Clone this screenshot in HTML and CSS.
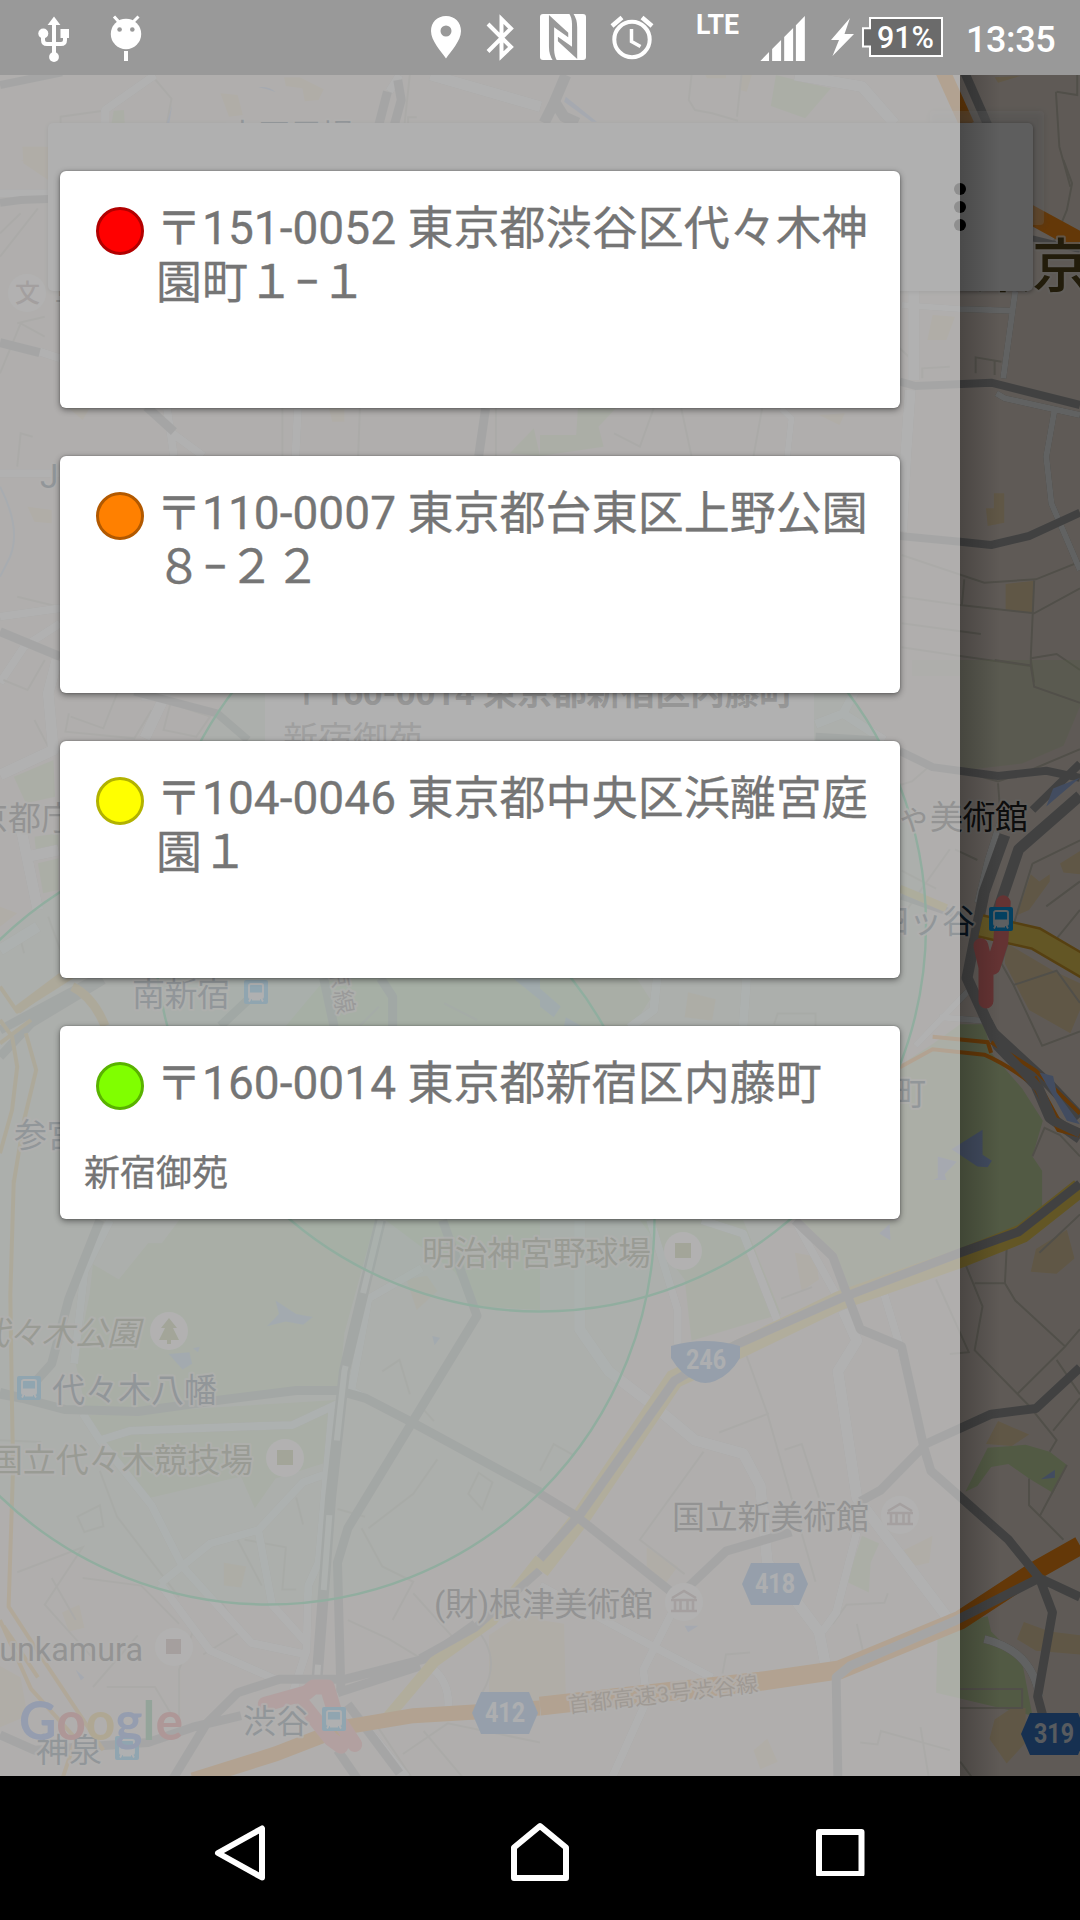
FILE: index.html
```html
<!DOCTYPE html>
<html lang="ja">
<head>
<meta charset="utf-8">
<title>地図</title>
<link rel="stylesheet" href="styles.css">
</head>
<body>
<header class="status">
  <div class="status-left">
    <svg width="33" height="75" viewBox="37 0 33 75"><g fill="none" stroke="#fff" stroke-width="4"><path d="M54 23V57M43 34V40Q43 44 47 44H61Q65 44 65 40V35"/></g><g fill="#fff"><path d="M47.600 25L54 16.500L60.400 25z"/><circle cx="54" cy="57" r="4.900"/><circle cx="43.300" cy="33.500" r="5"/><path d="M60.500 29h8.500v9h-8.500z"/></g></svg>
    <svg width="32" height="75" viewBox="110 0 32 75"><circle cx="126" cy="34" r="15.200" fill="#fff"/><path d="M114 16.500L119 22M138.500 16.500L133 22" stroke="#fff" stroke-width="3"/><path d="M124 51h4v10h-4z" fill="#fff"/><circle cx="119.600" cy="29.500" r="2.300" fill="#999"/><circle cx="132.300" cy="29.500" r="2.300" fill="#999"/></svg>
  </div>
  <div class="status-right">
    <svg width="30" height="75" viewBox="431 0 30 75"><path fill="#fff" fill-rule="evenodd" d="M446 16C437 16 431 22.500 431 31C431 41 441 51 446 58.500C451 51 461 41 461 31C461 22.500 455 16 446 16ZM446 25.500a5.500 5.500 0 1 1 0 11a5.500 5.500 0 1 1 0-11z"/></svg>
    <svg class="bt" width="28" height="75" viewBox="486 0 28 75"><path d="M488 24L511 47L501.500 56V19L511 28.500L488 51.500" fill="none" stroke="#fff" stroke-width="4"/></svg>
    <svg class="nfc" width="46" height="75" viewBox="540 0 46 75"><rect x="540" y="14" width="46" height="46" rx="3" fill="#fff"/><g transform="translate(540 0) scale(.3444 .3333)" fill="#999"><path id="nfc-half" d="M26 45L82 98V112L41 82V150Q42 172 50 182H38Q26 165 26 140Z"/><use href="#nfc-half" transform="rotate(180 67 111)"/></g></svg>
    <svg class="alarm" width="44" height="75" viewBox="610 0 44 75"><g fill="none" stroke="#fff"><circle cx="632" cy="39.500" r="17.700" stroke-width="4"/><path d="M631.500 29V41.500L640.500 46.500" stroke-width="3.500"/><path d="M612 26L622 17.500M652 26L642 17.500" stroke-width="4.500"/></g></svg>
    <svg class="lte" width="42" height="75" viewBox="697 0 42 75"><text x="696" y="34" font-size="28" textLength="43" lengthAdjust="spacingAndGlyphs">LTE</text></svg>
    <svg class="signal" width="46" height="75" viewBox="760 0 46 75"><g transform="translate(540 0) scale(.3444 .3333)" fill="#fff"><path d="M640 183H665V156ZM674 183V147L700 120V183ZM709 183V111L735 84V183ZM743 183V76L769 48V183Z"/></g></svg>
    <svg class="bolt" width="24" height="75" viewBox="831 0 24 75"><path d="M850 18L831 40H839L832.500 56L854 34H844.500Z" fill="#fff"/></svg>
    <svg class="battery" width="82" height="75" viewBox="862 0 82 75"><path d="M870 18H942V56H870V46.500H863V28.200H870Z" fill="#6b6b6b" stroke="#fff" stroke-width="2"/><text x="877" y="48" font-size="31" textLength="57" lengthAdjust="spacingAndGlyphs">91%</text></svg>
    <span class="clock">13:35</span>
  </div>
</header>

<main class="stage">
  <svg class="map" width="1080" height="1701" viewBox="0 75 1080 1701">
    <defs>
      <g id="station"><rect width="24" height="24" rx="2" fill="#0aa0f0"/><path d="M5 5.500Q5 4 7 4H17Q19 4 19 5.500V17Q19 18 18 18H6Q5 18 5 17ZM7 18L5 21.500M17 18L19 21.500M8 19.500H16" fill="none" stroke="#e6edf2" stroke-width="1.800"/><path d="M5 12.500H19V17.500H5z" fill="#e6edf2"/></g>
      <g id="museum" fill="none" stroke="#a07f7b" stroke-width="2.600"><path d="M-13 -2H13M-13 9H13M-9 -2V9M-3.500 -2V9M3.500 -2V9M9 -2V9M-12 -4L0 -11L12 -4"/></g>
      <circle id="poi" r="19" fill="#f9f8f6"/>
      <path id="hex" d="M9 0H57L66 21L57 42H9L0 21Z" fill="#3779cb"/>
    </defs>
    <rect y="75" width="1080" height="1701" fill="#ede2d8"/>

    <!-- northern blocks -->
    <g transform="scale(.34439 .33333)">
      <path class="park" d="M330 332L360 330L362 369H324Z"/>
      <path class="block" d="M640 280L690 285L705 345L665 350ZM825 232H870L940 268L925 300L885 304L878 265L830 258ZM65 440H140V540L68 490Z"/>
      <path class="minor" d="M452 240L498 296L485 369M176 369V350L300 332M1190 225L1175 369M1185 369V352H1210"/>
      <g class="roads"><path class="w8" d="M450 225L305 330V369"/><path class="w12" d="M1250 225L1570 320"/><path class="w8" d="M1160 225L1130 275"/></g>
      <path class="rail w8" d="M0 255L180 217"/><path class="rail w10" d="M1125 275L1100 375M1155 240L1165 300L1145 375"/>
      <path class="water" d="M500 315L492 369L484 369ZM750 262Q780 258 800 276L775 268Z"/>
    </g>
    <g transform="translate(540 0) scale(.34439 .33333)">
      <path class="park" d="M685 225L780 250L845 265L770 355L670 318Z"/>
      <path class="block" d="M480 225H540V235H485ZM585 225H615L600 275L580 270ZM1320 232L1395 228L1330 248Z"/>
      <path class="minor" d="M585 225L572 350M1500 275L1560 285V225M1498 275L1508 440L1540 560M440 225L432 300L450 330L500 340L575 362"/>
      <g class="roads"><path class="w12" d="M740 225L935 260L1030 372"/></g>
      <path class="rail w12" d="M75 225L40 310L12 369M45 310L70 350L110 369"/>
      <path class="orange w14" d="M1170 215L1240 375"/><path class="rail w10" d="M1232 215L1300 375"/>
      <path class="water" d="M75 290L165 365H150L70 305Z"/>
    </g>

    <!-- Shinjuku north -->
    <g transform="translate(0 160) scale(.34439 .33333)">
      <path class="block" d="M60 0H130V25ZM80 1040L150 1050V1090L100 1085ZM200 745L240 780L260 745ZM955 745H1000V785H965Z"/>
      <path class="park" d="M1480 880L1550 805L1568 888Z"/>
      <path class="minor" d="M0 290L110 145M50 490L130 470M50 920L60 820L95 830M0 220L60 160M820 745V888M1045 745L1040 888M1440 745V888M0 640L60 490L130 530M50 1310L170 1340"/>
      <g class="roads"><path class="w8" d="M0 100H140M115 575L175 595M500 820L590 888M865 745L858 888M0 940H175M0 1370L175 1345M0 1568L70 1460L175 1390M485 745L505 888"/></g>
      <path class="rail w8" d="M0 128L60 120L140 117"/><path class="rail w10" d="M0 548L115 578M425 740L505 815M1410 745L1390 888M0 1415L175 1490"/>
      <path class="thinwater" d="M0 980Q70 1120 20 1210L0 1250"/>
    </g>
    <g transform="translate(540 160) scale(.34439 .33333)">
      <path class="park" d="M110 745H220L170 800L185 860L0 888V825H105Z"/>
      <path class="block" d="M1140 465L1205 470L1180 540L1125 540ZM1318 1000H1348V1088L1300 1098L1295 1045H1318ZM1352 1272L1435 1262L1430 1358L1352 1352ZM810 765L885 760L870 795Z"/>
      <path class="minor" d="M215 820L290 860L330 745M410 745L440 888M645 745L620 888M1050 1185L1290 1268L1440 1258L1568 1205M1050 1310L1220 1335L1435 1360L1568 1285M1435 1262L1425 1495L1500 1482L1568 1530M1425 1495L1435 1568M1050 1390L1280 1422M1050 1462L1220 1488L1425 1518M1232 1258L1225 1335M1110 655V625L1190 620M1265 640V592L1340 605M1320 600V645M1045 565L1080 600M1520 0L1545 70L1530 150L1490 250"/>
      <g class="roads"><path class="w12" d="M1085 393V660M1075 690L1062 888L1050 1115"/><path class="w6" d="M1050 435L1220 447L1370 452M1380 393L1345 655M1325 700L1350 715L1568 765M1495 745L1470 890L1485 1030L1568 1230M700 745L730 775L718 888"/></g>
      <path class="rail w8" d="M1045 665L1090 678L1310 668L1568 735M1045 1128L1220 1145L1310 1155L1420 1128L1568 1058"/>
      <path class="orange w16" d="M1400 150L1568 245"/><path class="rail w6" d="M1430 235L1568 270"/>
    </g>

    <!-- Shinjuku, Yotsuya -->
    <g transform="translate(0 660) scale(.34439 .33333)">
      <path class="park" d="M40 350L155 300L160 410L75 430ZM100 530L170 520V570L105 580ZM110 610L170 595V690L125 700ZM950 950H1568V1098H830Z"/>
      <path class="block" d="M0 740L50 760L0 800Z"/>
      <path class="minor" d="M10 60L80 90L130 0M200 160L190 215L390 235L440 150M205 170L300 205L340 100M495 130L610 170L570 230L475 210ZM100 180L140 260M60 840L70 880M140 770L175 870M1290 1030L1385 1080M1045 1098L1100 1040"/>
      <g class="roads"><path class="w12" d="M165 0L140 100L155 270L0 345M50 450L110 750M0 870L110 800M80 590L170 570M420 235L480 105L410 105"/></g>
      <path class="rail w8" d="M390 95L630 160L720 240"/><path class="rail w10" d="M0 1110L290 950M0 1190L90 1090L300 960M640 1098L730 1010M940 955L970 1100M1105 955L1140 1010V1098"/>
      <path class="amber w4" d="M0 980L50 1055L210 950M0 1150L90 1080M0 1080L35 1130L50 1220L35 1350L0 1480M75 1120L105 1230L70 1380L40 1568"/><path class="amber w10" d="M210 980Q270 1010 305 1098M50 1050L180 950"/>
      <path class="blue" d="M1490 955H1568V1020Z"/>
    </g>
    <g transform="translate(540 660) scale(.34439 .35714)">
      <path class="park" d="M1080 0H1568V130L1520 240L1400 290L1220 310L1220 45H1080Z" fill-opacity=".35"/>
      <path class="park" d="M0 890H280L320 950L270 1025H0ZM1045 1135L1140 1075L1220 1020H1290L1310 1100L1400 1200L1460 1290L1430 1390L1458 1430V1568H1045Z"/>
      <path class="block" d="M1425 600L1450 620L1480 600L1480 620L1420 700L1385 715ZM1510 570L1568 535V600L1520 595ZM1350 790L1490 870L1568 905V980L1540 1045L1420 980L1350 850ZM430 930L510 950L500 1010L420 1000Z"/>
      <path class="minor" d="M1320 0L1425 15L1435 75L1568 120M1425 15V0M1220 310L1330 340L1420 310L1568 250M1430 570L1568 505M1430 570L1340 850L1375 910L1458 1080L1568 1040M1375 910L1500 870L1568 960M1470 690L1568 620M1500 780L1568 700M1330 345L1335 410M1190 530L1050 720M1150 640L1050 590M1205 530L1270 560M680 1020L690 990L800 990V1025M1430 1390L1465 1310L1510 1330L1568 1390M1045 350L1080 340L1140 290"/>
      <g class="roads"><path class="w10" d="M800 180L880 150L930 60M880 150L1000 225M340 890L330 980L260 1030M600 890L590 1025"/><path class="w6" d="M1568 380L1440 480L1410 520M1340 440L1300 560L1270 680M1250 920L1090 1080M1160 1000L1290 1010"/></g>
      <path class="rail w8" d="M800 215L980 225M1045 255L1140 300L1330 325L1470 310L1568 330M1568 290L1430 420M1050 660L1200 710"/>
      <path class="rail w12" d="M1568 380L1390 530L1330 700M1350 490L1290 650L1240 890L1330 1080L1440 1190L1480 1280L1568 1340M1310 1040L1480 1190L1568 1280"/>
      <path class="gold-edge" d="M1280 745L1440 780L1600 870"/>
      <path class="gold w8" d="M1045 640L1180 695"/><path class="gold w16" d="M1280 745L1440 780L1600 870"/>
      <path class="orange w4" d="M1045 1140L1140 1090L1290 1105Q1350 1130 1420 1180M1140 1055L1300 1070L1310 1100M1310 1070L1440 1150L1568 1270"/><path class="orange w10" d="M1430 1170L1510 1310L1568 1325"/>
      <path class="rail w10" d="M1300 1010L1350 1100L1450 1200L1490 1290L1568 1325"/>
      <path class="red w14" d="M1345 680L1338 790L1315 860M1280 800L1295 860V955"/>
      <path class="blue" d="M1285 1315L1285 1385L1312 1402L1300 1420L1270 1418L1195 1370ZM1155 1390L1210 1405L1175 1440L1195 1500L1130 1462L1155 1450ZM0 920L60 970L40 1000L0 970ZM75 1000L120 1025H70ZM1568 330L1470 410L1490 360ZM1450 1155L1490 1165L1500 1210L1568 1300L1530 1290L1490 1220Z"/>
    </g>

    <!-- Yoyogi, Shibuya -->
    <g transform="translate(0 1180) scale(.34439 .38265)">
      <path class="park" d="M270 220L345 260L430 165H470L520 105H1090L1000 400L985 540L860 545L400 605L250 600L220 480L260 300ZM250 615L980 575L940 740L800 780L740 858L700 775L430 832L300 680ZM1120 105H1568V340L1380 330L1320 240Z"/>
      <path class="block" d="M650 1000L715 1010L700 1065L650 1060ZM180 1130L230 1110L245 1170L200 1180ZM1420 1190L1568 1100V1380L1420 1340ZM1180 260L1240 250L1270 290L1210 340ZM0 1270L60 1300L80 1400L0 1430Z"/>
      <path class="minor" d="M225 880L290 850L300 905L245 920ZM290 760L340 880L520 1090M50 1025L240 960L130 1110L280 1260M240 1040L410 1060L520 1160M270 1325L400 1190M520 1430V1280L560 1180M690 940L760 1060M710 940L830 960L820 1070H860M1070 910L1200 820L1270 730M1050 910L1110 1010L1200 1050L1140 1150M1390 765L1430 790L1400 860L1360 820ZM1110 500L1160 470L1190 560M1230 600L1260 630M0 680L120 685M1010 1150L1130 1200L1240 1260M1200 1080L1340 1220M1380 1170Q1460 1250 1400 1340M150 1040L220 1150M310 1325H450L500 1400M1090 1420L1200 1568M1230 1440L1350 1568M1170 1500L1300 1420L1568 1470M860 830L880 900M980 860L1060 880M640 1100L700 1180L590 1240"/>
      <g class="roads"><path class="w8" d="M320 105L245 240L215 480M240 610L290 680L440 850L530 1010L730 1210L890 1240M290 680L380 655L850 640L980 585M465 1055L610 950L750 915L880 790L940 770M750 915L790 1110L890 1210M465 1055L610 1230L800 1305M1225 230L1070 310L1020 550L1190 630M850 1340L890 1230L895 1060L925 1000L965 600M1260 1280Q1310 1320 1300 1390M1010 1370L1180 1560"/></g>
      <path class="rail w10" d="M290 105L200 310L150 480L60 570L0 560M0 555L190 600L400 605L640 575L860 550H980L1060 570L1200 635L1568 815M1285 105L1385 355L1010 910L980 1000L990 1340"/>
      <path class="rail w12" d="M1105 105L1000 500L960 830L920 1310"/>
      <path class="dash w6" d="M1105 105L1000 500L960 830L920 1310"/>
      <path class="rail w10" d="M500 1568L600 1420L690 1340L810 1305H1000L1240 1250L1380 1160M980 1340L1220 1270M0 1450L100 1490L430 1470L560 1430L700 1400M980 1490L1040 1568M1010 1370L1160 1550"/>
      <path class="gold w12" d="M1568 990L1430 1150L1260 1260L1120 1410"/><path class="rail w8" d="M1568 1020L1380 1170L1220 1250"/>
      <path class="orange w14" d="M560 1568L800 1500L1000 1430L1200 1400L1568 1380"/>
      <path class="amber w4" d="M40 0L30 300L35 600L38 750L25 1115L130 1260L300 1490M0 1150L90 1330L220 1460L180 1568M10 1165L110 1300"/>
      <path class="red w14" d="M770 1370L890 1340L910 1325H950L975 1400L1030 1475M880 1370L960 1460L990 1480"/>
      <path class="blue" d="M800 315L860 350L908 358L880 378L830 370L775 382L810 350ZM490 455L550 450L558 480L530 495ZM1255 408L1278 412L1262 432ZM560 440L580 436L575 450ZM220 1280L245 1300L235 1308Z"/>
    </g>
    <g transform="translate(540 1180) scale(.34439 .38265)">
      <path class="park" d="M0 105H590L700 350L440 420L420 260L290 105ZM740 105H1045V0H1455L1452 100L1220 180L870 290L850 195ZM1235 815L1300 700L1410 692L1480 710L1530 745L1490 818L1420 780L1360 742L1310 750L1270 800ZM935 930L985 950L960 1000L955 1078L890 1050ZM1155 1170L1300 1140L1310 1180L1400 1260L1430 1400L1150 1340Z"/>
      <path class="block" d="M1440 180L1530 130L1552 205L1500 245L1425 240ZM1295 690L1330 630L1420 665L1370 695ZM1385 1200L1405 1155L1480 1180L1568 1190V1240L1440 1230ZM1320 1410L1370 1380H1410V1470L1355 1525L1305 1460ZM310 960L400 1010L360 1060L310 1010ZM1050 970L1140 930L1130 1000L1080 1010ZM0 1150L70 1160L75 1360H0ZM620 1490L660 1460L690 1520L640 1540ZM740 190L800 200L810 260L760 290Z"/>
      <path class="minor" d="M600 460L660 610L800 1050M520 660L665 610M475 710L290 940L420 1030M710 705L760 690L810 830M1150 260L1245 450L1190 455M1235 220L1285 330L1262 445L1420 590L1500 680L1480 710M1262 270H1350L1355 180M1350 270L1380 315L1525 435L1385 560M1525 435L1568 390M1500 470L1568 560M1490 655L1568 570M1420 780V850L1520 940M1450 880L1530 745M920 1160L940 1240L1150 1180M850 1160L890 1110L1000 1105L1010 1080M530 1290L540 1240L610 1235M930 1470L980 1475L990 1440L1190 1490M1105 1430L1130 1568M0 760L40 690L100 720M1220 1330H1400V1380H1220M1220 1520L1260 1568M1450 190L1568 90M700 310L790 280"/>
      <g class="roads"><path class="w12" d="M115 105V390L200 500L330 590L450 680L590 715L640 800L660 1000L810 1180L830 1270M880 340L920 420L865 500L920 830L1180 1140"/><path class="w8" d="M320 105L400 340V430M470 105L590 140L690 370M740 105L860 300M1000 300L1060 480M920 920L860 1130L820 1180M0 1060L330 1220L500 1300M400 1100L300 1280L310 1360L210 1560M1290 1200Q1430 1230 1450 1350"/></g>
      <path class="gold w16" d="M0 1020L120 880L390 520L570 445L870 315L1220 205L1400 140L1568 20"/><path class="rail w10" d="M0 990L120 870L390 525L570 430L870 310L1220 190L1390 135L1568 10"/>
      <path class="orange w16" d="M0 1375L640 1310L870 1280L1220 1150L1440 1020L1568 955"/>
      <path class="rail w10" d="M740 105L850 200L930 390L1050 435L1115 700L1135 760L1360 940L1450 1040L1488 1130L1445 1350L1460 1400M1568 490L1440 597L1310 612L1120 690L990 810L930 840M730 920L540 970L400 1090L100 875L0 820M1450 1040L1568 1090M865 1568L860 1300L900 1270L1210 1150L1450 1040"/>
      <path class="blue" d="M1455 782L1495 757V778ZM420 1165L460 1165L430 1182ZM985 140L1015 115L1018 158Z"/>
    </g>

    <circle class="zone" cx="268" cy="1218" r="386.500"/>
    <circle class="zone" cx="540" cy="925.500" r="386"/>

    <g class="label">
      <text class="rapid" x="226" y="148" textLength="128">高田馬場</text>
      <text class="rapid" x="40" y="488">JR</text>
      <text x="-58" y="830" textLength="132">東京都庁</text>
      <text class="rapid" x="132" y="1006" textLength="98">南新宿</text>
      <text class="rapid" x="14" y="1147" textLength="98">参宮橋</text>
      <text x="865" y="829" textLength="163">ちゃ美術館</text>
      <text class="rapid" x="876" y="933" textLength="99">四ッ谷</text>
      <text class="rapid" x="828" y="1105" textLength="98">信濃町</text>
      <text class="green" x="422" y="1265" textLength="229">明治神宮野球場</text>
      <text class="green italic" x="-24" y="1345" textLength="164">代々木公園</text>
      <text class="rapid" x="52" y="1402" textLength="165">代々木八幡</text>
      <text class="green" x="-10" y="1472" textLength="263">国立代々木競技場</text>
      <text x="434" y="1616" textLength="219">(財)根津美術館</text>
      <text x="672" y="1529" textLength="197">国立新美術館</text>
      <text x="-21" y="1661" textLength="164" lengthAdjust="spacingAndGlyphs">Bunkamura</text>
      <text class="rapid" x="243" y="1733" textLength="66">渋谷</text>
      <text class="rapid" x="36" y="1762" textLength="66">神泉</text>
      <text class="road-name" transform="translate(569 1713) rotate(-6.500)" textLength="191">首都高速3号渋谷線</text>
      <text class="line-name" transform="translate(329 966) rotate(80)" textLength="50">京線</text>
      <text class="city" x="974" y="287">東京</text>
      <text x="55" y="307" font-size="28">早</text>
    </g>
    <use href="#station" x="244" y="980"/><use href="#station" x="989" y="907"/><use href="#station" x="17" y="1376"/><use href="#station" x="322" y="1707"/><use href="#station" x="115" y="1736"/>
    <use href="#poi" x="27" y="293"/><text class="school" x="15" y="302">文</text>
    <use href="#poi" x="683" y="1251"/><path d="M675 1243h16v15h-16z" fill="#8ea34d"/>
    <use href="#poi" x="285" y="1458"/><path d="M277 1450h16v15h-16z" fill="#8ea34d"/>
    <use href="#poi" x="174" y="1647"/><path d="M166 1639h15v15h-15z" fill="#a07470"/>
    <use href="#poi" x="169" y="1331"/><path d="M169 1318L177 1328H173L179 1340H171V1344H167V1340H159L165 1328H161Z" fill="#8ea34d"/>
    <use href="#poi" x="900" y="1515"/><use href="#museum" x="900" y="1515"/>
    <use href="#poi" x="684" y="1602"/><use href="#museum" x="684" y="1602"/>
    <use href="#hex" x="472" y="1692"/><use href="#hex" x="742" y="1563"/><use href="#hex" x="1021" y="1713"/>
    <path d="M671 1346Q705 1336 740 1346V1358Q730 1375 715 1381Q705 1385 696 1381Q681 1375 671 1358Z" fill="#3779cb"/>
    <g class="shield"><text x="485" y="1722" textLength="40" lengthAdjust="spacingAndGlyphs">412</text><text x="755" y="1593" textLength="40" lengthAdjust="spacingAndGlyphs">418</text><text x="1034" y="1743" textLength="40" lengthAdjust="spacingAndGlyphs">319</text><text x="686" y="1369" textLength="40" lengthAdjust="spacingAndGlyphs">246</text></g>

    <text class="google" x="19" y="1740" textLength="164" lengthAdjust="spacingAndGlyphs"><tspan fill="#2f68e8">G</tspan><tspan fill="#e04040">o</tspan><tspan fill="#e8b020">o</tspan><tspan fill="#2f68e8">g</tspan><tspan fill="#2b9c50">l</tspan><tspan fill="#e04040">e</tspan></text>

    <g class="bubble"><rect x="265" y="600" width="549" height="200"/><text class="bubble-title" x="289" y="705" textLength="505">〒160-0014 東京都新宿区内藤町</text><text class="bubble-sub" x="283" y="752" textLength="140">新宿御苑</text></g>

    <rect class="locate" x="930" y="111" width="114" height="114" rx="4"/>
    <rect class="toolbar" x="48" y="123" width="985" height="168" rx="5"/>
    <circle cx="960" cy="189" r="6"/><circle cx="960" cy="207" r="6"/><circle cx="960" cy="225" r="6"/>
  </svg>

  <div class="scrim"></div>

  <aside class="drawer">
    <article class="card"><i class="dot red-dot"></i><p class="address">〒151-0052 東京都渋谷区代々木神園町１−１</p></article>
    <article class="card"><i class="dot orange-dot"></i><p class="address">〒110-0007 東京都台東区上野公園８−２２</p></article>
    <article class="card"><i class="dot yellow-dot"></i><p class="address">〒104-0046 東京都中央区浜離宮庭園１</p></article>
    <article class="card named"><i class="dot green-dot"></i><p class="address">〒160-0014 東京都新宿区内藤町</p><p class="place">新宿御苑</p></article>
  </aside>
</main>

<nav class="nav">
  <svg width="54" height="62" viewBox="213 1820 54 62"><path d="M262 1828.500V1877.500L218 1853Z"/></svg>
  <svg class="home" width="60" height="66" viewBox="510 1818 60 66"><path d="M514 1878V1847.500L540 1826L566 1847.500V1878Z"/></svg>
  <svg width="50" height="50" viewBox="815 1826 50 50"><path d="M819 1832H861.500V1874H819Z"/></svg>
</nav>
</body>
</html>
```

FILE: styles.css
```css
* { box-sizing: border-box; }
body {
  margin: 0;
  width: 1080px;
  height: 1920px;
  overflow: hidden;
  background: #000;
  font-family: Roboto, "Noto Sans CJK JP", sans-serif;
  display: grid;
  grid-template-rows: 75px 1701px 144px;
}
svg { display: block; flex: none; }

/* status bar */
.status { background: #999; display: flex; justify-content: space-between; }
.status-left { display: flex; gap: 40px; padding-left: 37px; }
.status-right { display: flex; padding-right: 24px; color: #fff; }
.bt { margin-left: 25px; }
.nfc { margin-left: 26px; }
.alarm { margin-left: 24px; }
.lte { margin-left: 43px; fill: #fff; font-weight: 700; }
.signal { margin-left: 21px; }
.bolt { margin-left: 25px; }
.battery { margin-left: 7px; fill: #fff; font-weight: 500; }
.clock { margin-left: 22px; width: 90px; font-size: 36px; font-weight: 500; line-height: 80px; letter-spacing: -.4px; white-space: nowrap; }

/* stacked layers */
.stage { display: grid; grid-template: 1701px / 1080px; overflow: hidden; }
.stage > * { grid-area: 1 / 1; }
.scrim { background: linear-gradient(90deg, rgba(0,0,0,.22), transparent) 960px 0 / 40px 100% no-repeat, rgba(0,0,0,.6); }

/* map */
.map path { vector-effect: non-scaling-stroke; }
.park { fill: #cde1aa; }
.block { fill: #f0d9ae; }
.water, .blue { fill: #a5bff0; }
.thinwater { fill: none; stroke: #b5d0f0; stroke-width: 2; }
.minor { fill: none; stroke: #cac5b6; stroke-width: 2; }
.roads { fill: none; stroke: #f3f4f5; filter: drop-shadow(0 0 1.5px #aaa494); stroke-linejoin: round; }
.rail { fill: none; stroke: #a4a4a4; stroke-linejoin: round; }
.dash { fill: none; stroke: #f3f2f0; stroke-dasharray: 75 75; }
.orange { fill: none; stroke: #f98c14; }
.amber { fill: none; stroke: #f3b64e; stroke-linejoin: round; }
.gold { fill: none; stroke: #f7d75c; }
.gold-edge { fill: none; stroke: #d8a02c; stroke-width: 24; }
.red { fill: none; stroke: #f98080; stroke-linecap: round; stroke-linejoin: round; }
.w4 { stroke-width: 4; }
.w6 { stroke-width: 6; }
.w8 { stroke-width: 8; }
.w10 { stroke-width: 9; }
.w12 { stroke-width: 11; }
.w14 { stroke-width: 15; }
.w16 { stroke-width: 19; }
.zone { fill: rgba(0,255,140,.1); stroke: #10dc78; stroke-width: 2.4; }
.label { font-size: 33px; fill: #222; stroke: rgba(240,235,228,.75); stroke-width: 4px; paint-order: stroke; stroke-linejoin: round; }
.rapid { fill: #16344c; }
.green { fill: #4c5b2c; }
.italic { font-style: italic; }
.road-name { font-size: 22px; fill: #79502a; }
.line-name { font-size: 24px; fill: #555; }
.city { font-size: 58px; font-weight: 500; fill: #55461c; }
.school { font-size: 25px; font-weight: 500; fill: #957773; }
.shield { font-size: 28px; font-weight: 700; fill: #dce4ee; }
.google { font-family: Lato, sans-serif; font-size: 54px; font-weight: 700; }
.bubble rect { fill: #f6f6f6; }
.bubble-title { font-size: 35px; font-weight: 700; fill: #333; }
.bubble-sub { font-size: 35px; fill: #777; }
.locate { fill: #fff; fill-opacity: .28; filter: drop-shadow(0 1px 3px #888); }
.toolbar { fill: #ebebeb; filter: drop-shadow(0 1px 2px rgba(0,0,0,.4)); }

/* drawer */
.drawer {
  width: 960px;
  padding: 96px 60px;
  background: rgba(219,219,219,.65);
  display: flex;
  flex-direction: column;
  gap: 48px;
}
.card {
  height: 237px;
  padding: 33px 24px 0 36px;
  background: #fff;
  border-radius: 6px;
  box-shadow: 0 2px 6px rgba(0,0,0,.45), 0 0 2px rgba(0,0,0,.3);
  color: #757575;
  -webkit-text-stroke: .3px #757575;
  display: grid;
  grid-template-columns: 48px 720px;
  grid-template-rows: 108px auto;
  column-gap: 12px;
}
.card p { margin: 0; }
.dot { width: 48px; height: 48px; margin-top: 3px; border-radius: 50%; border: 3px solid; }
.red-dot { background: #f00; border-color: #b20000; }
.orange-dot { background: #ff8000; border-color: #b25900; }
.yellow-dot { background: #ff0; border-color: #b2b200; }
.green-dot { background: #80ff00; border-color: #59b200; }
.card .address { font-size: 46px; line-height: 54px; margin-top: -3px; letter-spacing: .04px; }
.named { height: 193px; grid-template-rows: 70px auto; }
.card .place { grid-column: 1 / -1; font-size: 36px; line-height: 54px; padding-top: 18px; margin-left: -12px; }

/* system navigation */
.nav { display: flex; align-items: center; justify-content: space-between; padding: 6px 215px 0 213px; }
.home { margin-left: -2px; }
.nav path { fill: none; stroke: #fff; stroke-width: 6; stroke-linejoin: round; }
```
